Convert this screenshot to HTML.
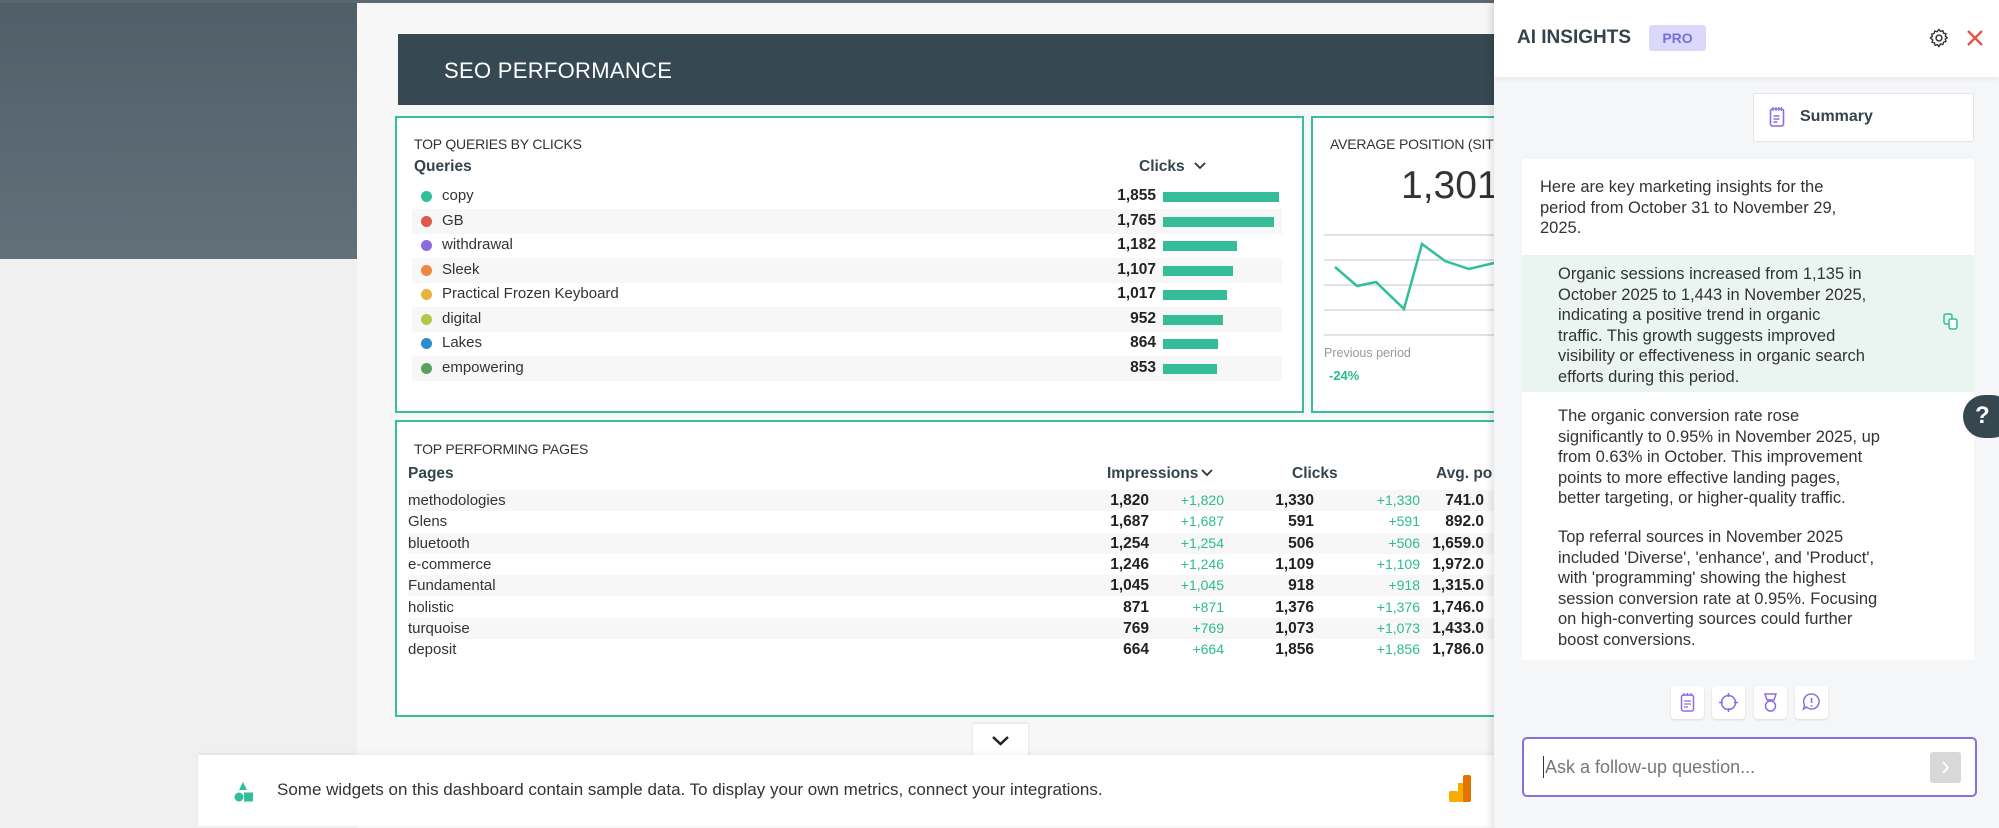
<!DOCTYPE html>
<html><head><meta charset="utf-8"><style>
*{box-sizing:border-box;margin:0;padding:0}
body{width:1999px;height:828px;overflow:hidden;position:relative;background:#f0f0f0;font-family:"Liberation Sans",sans-serif;color:#333}
.abs{position:absolute}
#leftdark{left:0;top:0;width:357px;height:259px;background:linear-gradient(180deg,#4f5f68,#62707a)}
#main{left:357px;top:0;width:1642px;height:828px;background:#f7f7f7}
#seo{left:398px;top:34px;width:1100px;height:71px;background:#364952;color:#fff;font-size:22px;padding:24px 0 0 46px;letter-spacing:.3px}
.wid{background:#fff;border:2px solid #35bf9c}
.title{font-size:14px;color:#333;letter-spacing:-.2px}
.row{position:absolute;height:25px;font-size:15px;color:#333}
.dot{position:absolute;width:11px;height:11px;border-radius:50%;top:7px}
.num{position:absolute;font-weight:bold;text-align:right;font-size:15.5px;color:#222}
.bar{position:absolute;height:10px;background:#35bc98;top:8px}
.g{color:#2dbb8f;font-size:14px}
#ai{left:1494px;top:0;width:505px;height:828px;background:#f5f6f8;box-shadow:-3px 0 8px rgba(0,0,0,.12)}
.p{font-size:16.5px;line-height:20.6px;color:#333;white-space:nowrap}
.ib{position:absolute;top:686px;width:33px;height:33px;background:#fff;border-radius:4px;box-shadow:0 1px 2px rgba(0,0,0,.12)}
</style></head><body>
<div class="abs" id="leftdark"></div>
<div class="abs" id="main"></div>
<div class="abs" style="left:0;top:0;width:1999px;height:3px;background:#5a6870"></div>
<div class="abs" id="seo">SEO PERFORMANCE</div>

<div class="abs wid" style="left:395px;top:116px;width:909px;height:297px"></div>
<div class="abs title" style="left:414px;top:136px">TOP QUERIES BY CLICKS</div>
<div class="abs" style="left:414px;top:158px;font-size:15.5px;font-weight:bold;color:#34444c">Queries</div>
<div class="abs" style="left:1139px;top:158px;font-size:15.5px;font-weight:bold;color:#34444c">Clicks <svg width="14" height="10" style="margin-left:4px"><path d="M2 2l5 5 5-5" stroke="#333" stroke-width="1.8" fill="none"/></svg></div>

<div class="row" style="left:412px;top:184px;width:870px"><span class="dot" style="left:9px;background:#2fbf9a"></span><span class="abs" style="left:30px;top:3px">copy</span><span class="num" style="right:126px;top:3px">1,855</span><span class="bar" style="left:751px;width:116px"></span></div>
<div class="row" style="left:412px;top:209px;width:870px;background:#f7f7f7"><span class="dot" style="left:9px;background:#e0574b"></span><span class="abs" style="left:30px;top:3px">GB</span><span class="num" style="right:126px;top:3px">1,765</span><span class="bar" style="left:751px;width:111px"></span></div>
<div class="row" style="left:412px;top:233px;width:870px"><span class="dot" style="left:9px;background:#8c6be0"></span><span class="abs" style="left:30px;top:3px">withdrawal</span><span class="num" style="right:126px;top:3px">1,182</span><span class="bar" style="left:751px;width:74px"></span></div>
<div class="row" style="left:412px;top:258px;width:870px;background:#f7f7f7"><span class="dot" style="left:9px;background:#ef8740"></span><span class="abs" style="left:30px;top:3px">Sleek</span><span class="num" style="right:126px;top:3px">1,107</span><span class="bar" style="left:751px;width:70px"></span></div>
<div class="row" style="left:412px;top:282px;width:870px"><span class="dot" style="left:9px;background:#e9b23b"></span><span class="abs" style="left:30px;top:3px">Practical Frozen Keyboard</span><span class="num" style="right:126px;top:3px">1,017</span><span class="bar" style="left:751px;width:64px"></span></div>
<div class="row" style="left:412px;top:307px;width:870px;background:#f7f7f7"><span class="dot" style="left:9px;background:#b6c545"></span><span class="abs" style="left:30px;top:3px">digital</span><span class="num" style="right:126px;top:3px">952</span><span class="bar" style="left:751px;width:60px"></span></div>
<div class="row" style="left:412px;top:331px;width:870px"><span class="dot" style="left:9px;background:#2b8ccf"></span><span class="abs" style="left:30px;top:3px">Lakes</span><span class="num" style="right:126px;top:3px">864</span><span class="bar" style="left:751px;width:55px"></span></div>
<div class="row" style="left:412px;top:356px;width:870px;background:#f7f7f7"><span class="dot" style="left:9px;background:#58a25d"></span><span class="abs" style="left:30px;top:3px">empowering</span><span class="num" style="right:126px;top:3px">853</span><span class="bar" style="left:751px;width:54px"></span></div>

<div class="abs wid" style="left:1311px;top:116px;width:200px;height:297px"></div>
<div class="abs title" style="left:1330px;top:136px;white-space:nowrap">AVERAGE POSITION (SITE)</div>
<div class="abs" style="left:1401px;top:164px;font-size:39px;color:#333">1,301.</div>
<svg class="abs" style="left:1324px;top:225px" width="170" height="120">
<g stroke="#e2e2e2" stroke-width="2"><line x1="0" x2="170" y1="10" y2="10"/><line x1="0" x2="170" y1="35" y2="35"/><line x1="0" x2="170" y1="60" y2="60"/><line x1="0" x2="170" y1="85" y2="85"/><line x1="0" x2="170" y1="110" y2="110"/></g>
<polyline fill="none" stroke="#2fbf9a" stroke-width="2.5" points="11,42 33,61 52,57 80,84 98,19 121,36 145,44 170,38"/>
</svg>
<div class="abs" style="left:1324px;top:346px;font-size:12.5px;color:#999">Previous period</div>
<div class="abs" style="left:1329px;top:368px;font-size:13px;font-weight:bold;color:#2dbb8f">-24%</div>

<div class="abs wid" style="left:395px;top:420px;width:1110px;height:297px"></div>
<div class="abs title" style="left:414px;top:441px">TOP PERFORMING PAGES</div>
<div class="abs" style="left:408px;top:465px;font-size:15.5px;font-weight:bold;color:#34444c">Pages</div>
<div class="abs" style="left:1107px;top:465px;font-size:15.5px;font-weight:bold;color:#34444c">Impressions<svg width="14" height="10" style="margin-left:2px"><path d="M2 2l5 5 5-5" stroke="#333" stroke-width="1.8" fill="none"/></svg></div>
<div class="abs" style="left:1292px;top:465px;font-size:15.5px;font-weight:bold;color:#34444c">Clicks</div>
<div class="abs" style="left:1436px;top:465px;font-size:15.5px;font-weight:bold;color:#34444c">Avg. po</div>
<div id="pages"></div>

<div class="abs" style="left:973px;top:724px;width:55px;height:34px;background:#fff;box-shadow:0 -1px 3px rgba(0,0,0,.1)"><svg width="55" height="34"><path d="M20 13l7.5 7 7.5-7" stroke="#222" stroke-width="2.5" fill="none"/></svg></div>
<div class="abs" style="left:198px;top:755px;width:1300px;height:71px;background:#fff;box-shadow:0 -2px 4px rgba(0,0,0,.05)"></div>
<svg class="abs" style="left:233px;top:781px" width="22" height="22"><path d="M10 1l4 8h-8z" fill="#2fbf9a"/><circle cx="6" cy="16" r="4.5" fill="#2fbf9a"/><rect x="11" y="11.5" width="9" height="9" fill="#2fbf9a"/></svg>
<div class="abs" style="left:277px;top:780px;font-size:17px;color:#333">Some widgets on this dashboard contain sample data. To display your own metrics, connect your integrations.</div>
<svg class="abs" style="left:1449px;top:775px" width="30" height="28"><rect x="0" y="16" width="9" height="11" rx="2" fill="#f9ab00"/><rect x="9" y="8" width="9" height="19" fill="#f9ab00"/><rect x="14" y="0" width="8" height="27" rx="2" fill="#e37400"/></svg>

<div class="abs" id="ai"></div>
<div class="abs" style="left:1494px;top:0;width:505px;height:77px;background:#fff;box-shadow:0 2px 5px rgba(0,0,0,.06)"></div>
<div class="abs" style="left:1517px;top:27px;font-size:19px;font-weight:bold;color:#34444c">AI INSIGHTS</div>
<div class="abs" style="left:1649px;top:25px;width:57px;height:26px;background:#dcd8fb;border-radius:3px;color:#7b6fd6;font-size:14px;font-weight:bold;text-align:center;line-height:26px">PRO</div>
<svg class="abs" style="left:1928px;top:27px" width="22" height="22" viewBox="0 0 24 24"><circle cx="12" cy="12" r="3.2" fill="none" stroke="#333" stroke-width="1.6"/><path d="M12 2.5l1.6 2.3 2.7-.8.6 2.7 2.7.6-.8 2.7 2.3 1.6-2.3 1.6.8 2.7-2.7.6-.6 2.7-2.7-.8L12 21.5l-1.6-2.3-2.7.8-.6-2.7-2.7-.6.8-2.7L2.5 12l2.3-1.6-.8-2.7 2.7-.6.6-2.7 2.7.8z" fill="none" stroke="#333" stroke-width="1.5" stroke-linejoin="round"/></svg>
<svg class="abs" style="left:1966px;top:29px" width="18" height="18"><path d="M2 2l14 14M16 2L2 16" stroke="#e5534b" stroke-width="2.4"/></svg>

<div class="abs" style="left:1753px;top:93px;width:221px;height:49px;background:#fff;border:1px solid #e6e6e6;border-radius:2px"></div>
<svg class="abs" style="left:1769px;top:106px" width="16" height="22"><rect x="1.5" y="3" width="13" height="17" rx="2" fill="none" stroke="#8b6fe0" stroke-width="1.6"/><path d="M4 1v4M7 1v4M10 1v4M12.5 1v4" stroke="#8b6fe0" stroke-width="1.2"/><path d="M4.5 10h6M4.5 13h6M4.5 16h4" stroke="#8b6fe0" stroke-width="1.4"/></svg>
<div class="abs" style="left:1800px;top:108px;font-size:16px;font-weight:bold;color:#34444c">Summary</div>

<div class="abs" style="left:1522px;top:159px;width:452px;height:501px;background:#fff;border-radius:3px"></div>
<div class="abs p" style="left:1540px;top:177px">Here are key marketing insights for the<br>period from October 31 to November 29,<br>2025.</div>
<div class="abs" style="left:1522px;top:255px;width:452px;height:137px;background:#eaf5f1"></div>
<div class="abs p" style="left:1558px;top:264px">Organic sessions increased from 1,135 in<br>October 2025 to 1,443 in November 2025,<br>indicating a positive trend in organic<br>traffic. This growth suggests improved<br>visibility or effectiveness in organic search<br>efforts during this period.</div>
<svg class="abs" style="left:1943px;top:313px" width="16" height="18"><rect x="1" y="1" width="8" height="10" rx="2" fill="none" stroke="#2fbf9a" stroke-width="1.5"/><rect x="6" y="6" width="8" height="10" rx="2" fill="#fff" stroke="#2fbf9a" stroke-width="1.5"/></svg>
<div class="abs p" style="left:1558px;top:406px">The organic conversion rate rose<br>significantly to 0.95% in November 2025, up<br>from 0.63% in October. This improvement<br>points to more effective landing pages,<br>better targeting, or higher-quality traffic.</div>
<div class="abs p" style="left:1558px;top:527px">Top referral sources in November 2025<br>included 'Diverse', 'enhance', and 'Product',<br>with 'programming' showing the highest<br>session conversion rate at 0.95%. Focusing<br>on high-converting sources could further<br>boost conversions.</div>

<div class="ib" style="left:1671px"><svg width="33" height="33"><rect x="10.5" y="9" width="12" height="16" rx="2" fill="none" stroke="#8b6fe0" stroke-width="1.5"/><path d="M13 7v3M16.5 7v3M20 7v3M13 15h7M13 18h7M13 21h4" stroke="#8b6fe0" stroke-width="1.3"/></svg></div>
<div class="ib" style="left:1712px"><svg width="33" height="33"><circle cx="16.5" cy="16.5" r="7" fill="none" stroke="#8b6fe0" stroke-width="1.5"/><path d="M16.5 7v4M16.5 22v4M7 16.5h4M22 16.5h4" stroke="#8b6fe0" stroke-width="1.5"/></svg></div>
<div class="ib" style="left:1754px"><svg width="33" height="33"><path d="M11 8h11l-2 6h-7z" fill="none" stroke="#8b6fe0" stroke-width="1.5"/><circle cx="16.5" cy="20" r="5" fill="none" stroke="#8b6fe0" stroke-width="1.5"/></svg></div>
<div class="ib" style="left:1795px"><svg width="33" height="33"><path d="M16.5 8a7.5 7.5 0 1 1-5 13l-3 2 1-4a7.5 7.5 0 0 1 7-11z" fill="none" stroke="#8b6fe0" stroke-width="1.5"/><path d="M16.5 12v5M16.5 19v1.5" stroke="#8b6fe0" stroke-width="1.6"/></svg></div>

<div class="abs" style="left:1522px;top:737px;width:455px;height:60px;background:#fff;border:2px solid #8b6fe0;border-radius:5px"></div>
<div class="abs" style="left:1543px;top:756px;width:1px;height:22px;background:#333"></div>
<div class="abs" style="left:1545px;top:757px;font-size:18px;color:#777">Ask a follow-up question...</div>
<div class="abs" style="left:1930px;top:752px;width:31px;height:31px;background:#d8d8d8;border-radius:3px"><svg width="31" height="31"><path d="M13 10l5 5.5-5 5.5" stroke="#fff" stroke-width="1.8" fill="none"/></svg></div>

<div class="abs" style="left:1963px;top:395px;width:50px;height:43px;background:#37474f;border-radius:22px;color:#fff;font-weight:bold;font-size:24px;padding:7px 0 0 12px">?</div>

<script>
var d=[["methodologies","1,820","+1,820","1,330","+1,330","741.0"],["Glens","1,687","+1,687","591","+591","892.0"],["bluetooth","1,254","+1,254","506","+506","1,659.0"],["e-commerce","1,246","+1,246","1,109","+1,109","1,972.0"],["Fundamental","1,045","+1,045","918","+918","1,315.0"],["holistic","871","+871","1,376","+1,376","1,746.0"],["turquoise","769","+769","1,073","+1,073","1,433.0"],["deposit","664","+664","1,856","+1,856","1,786.0"]];
var h="";d.forEach(function(r,i){var t=490+i*21.3;
h+='<div class="abs" style="left:408px;top:'+t+'px;width:1086px;height:21px;'+(i%2==0?'background:#f7f7f7':'')+'"></div>';
h+='<div class="abs" style="left:408px;top:'+(t+2)+'px;font-size:15px;color:#333">'+r[0]+'</div>';
var cols=[[1149,r[1],0],[1224,r[2],1],[1314,r[3],0],[1420,r[4],1],[1484,r[5],0]];
cols.forEach(function(c){h+='<div class="abs '+(c[2]?'g':'')+'" style="right:'+(1999-c[0])+'px;top:'+(t+2)+'px;'+(c[2]?'':'font-weight:bold;font-size:15.5px;color:#222')+'">'+c[1]+'</div>'});});
document.getElementById("pages").innerHTML=h;
</script>
</body></html>
